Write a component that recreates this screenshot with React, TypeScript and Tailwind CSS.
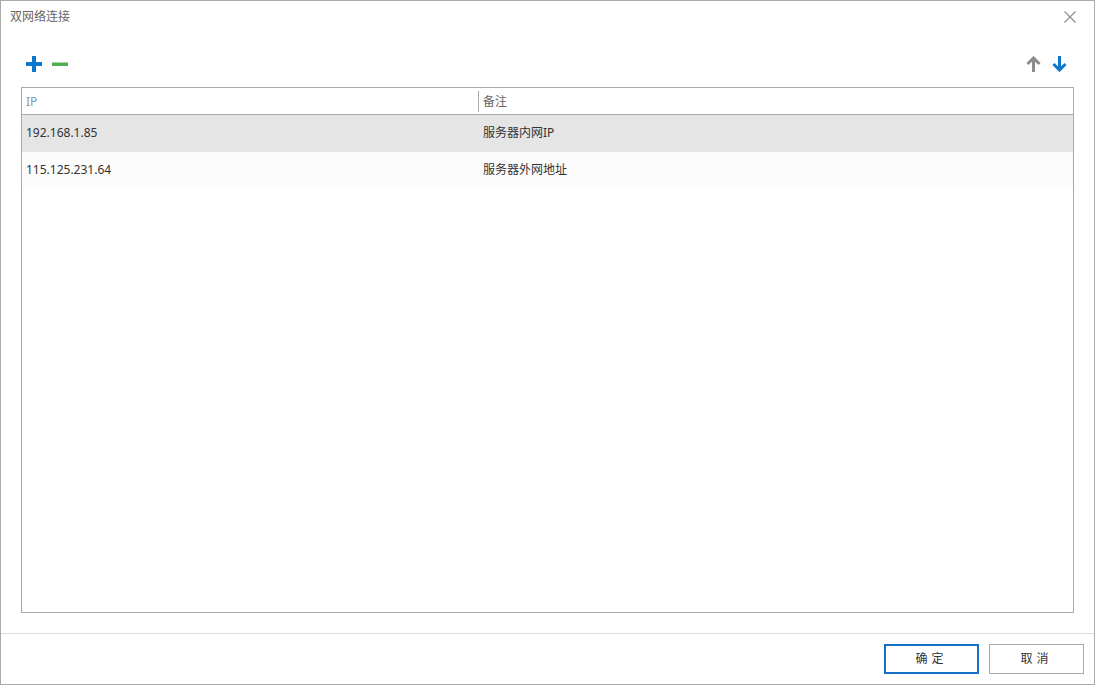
const rows = [
  { ip: "192.168.1.85", note: "服务器内网IP", selected: true },
  { ip: "115.125.231.64", note: "服务器外网地址", selected: false },
];

function ArrowIcon({ up, color }: { up: boolean; color: string }) {
  return (
    <svg width="15" height="16" viewBox="0 0 15 16" fill="none">
      {up ? (
        <path d="M7.5 16V2M1.5 8L7.5 2L13.5 8" stroke={color} strokeWidth="3" />
      ) : (
        <path d="M7.5 0V14M1.5 8L7.5 14L13.5 8" stroke={color} strokeWidth="3" />
      )}
    </svg>
  );
}

export default function App() {
  return (
    <div
      className="w-[1095px] h-[685px] bg-white border border-[#a9a9a9] flex flex-col text-[12px] text-[#333]"
      style={{ fontFamily: '"Noto Sans", "Noto Sans CJK SC", sans-serif' }}
    >
      <div className="h-[31px] flex items-center justify-between pl-[9px] pr-[18px]">
        <span className="text-[#666] text-[12px]">双网络连接</span>
        <svg width="12" height="12" viewBox="0 0 12 12" fill="none">
          <path d="M0.5 0.5L11.5 11.5M11.5 0.5L0.5 11.5" stroke="#8a8a8a" strokeWidth="1.1" />
        </svg>
      </div>

      <div className="h-[55px] flex items-end justify-between pl-[25px] pr-[27px] pb-[15px]">
        <div className="flex items-center gap-[10px]">
          <svg width="16" height="16" viewBox="0 0 16 16">
            <rect x="6" y="0" width="4" height="16" fill="#0b78d0" />
            <rect x="0" y="6" width="16" height="4" fill="#0b78d0" />
          </svg>
          <svg width="16" height="16" viewBox="0 0 16 16">
            <rect x="0" y="6.5" width="16" height="3.5" fill="#4caf50" />
          </svg>
        </div>
        <div className="flex items-center gap-[11px]">
          <ArrowIcon up color="#8c8c8c" />
          <ArrowIcon up={false} color="#0b78d0" />
        </div>
      </div>

      <div className="mx-[20px] h-[526px] border border-[#a9a9a9] flex flex-col">
        <div className="h-[27px] flex items-center border-b border-[#a9a9a9] pt-px">
          <div className="w-[456px] pl-[4px] text-[#8497b0]">IP</div>
          <div className="h-[21px] w-px bg-[#a9a9a9]" />
          <div className="pl-[4px] text-[#666]">备注</div>
        </div>
        {rows.map((r) => (
          <div
            key={r.ip}
            className={`h-[37px] flex items-center pb-px ${r.selected ? "bg-[#e5e5e5]" : "bg-[#fcfcfc]"}`}
          >
            <div className="w-[457px] pl-[4px]">{r.ip}</div>
            <div className="pl-[4px]">{r.note}</div>
          </div>
        ))}
      </div>

      <div className="mt-[20px] flex-1 border-t border-[#dcdcdc] flex justify-end items-start pt-[10px] pr-[10px] gap-[10px]">
        <button className="w-[95px] h-[30px] border-2 border-[#1570c4] bg-white text-[#333] tracking-[4px]">
          确定
        </button>
        <button className="w-[95px] h-[30px] border border-[#a9a9a9] bg-white text-[#333] tracking-[4px]">
          取消
        </button>
      </div>
    </div>
  );
}
